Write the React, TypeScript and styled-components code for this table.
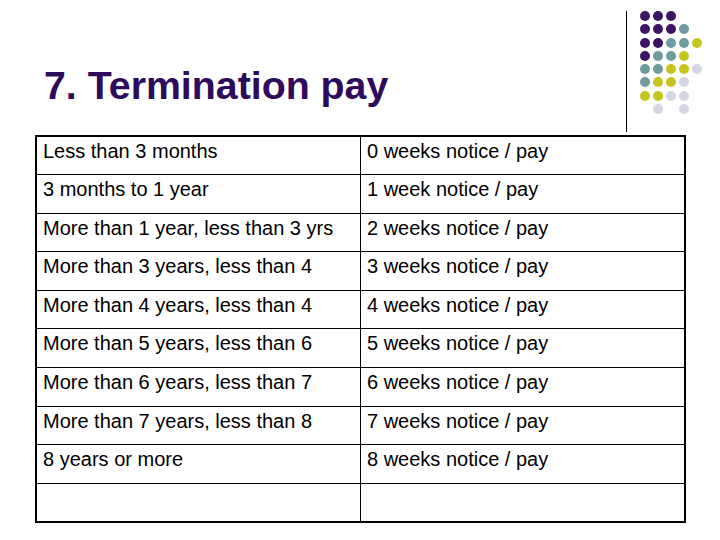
import styled, { createGlobalStyle } from 'styled-components';

const GlobalStyle = createGlobalStyle`
	html, body {
		margin: 0;
		padding: 0;
		background: #ffffff;
	}
	body {
		font-family: 'Liberation Sans', Arial, sans-serif;
	}
`;

const Slide = styled.div`
	width: 720px;
	height: 540px;
	background: #ffffff;
	overflow: hidden;
`;

const Header = styled.header`
	display: flex;
	height: 135px;
`;

const Title = styled.h1`
	flex: 1;
	margin: 0;
	padding: 62px 0 0 44px;
	font-size: 39.3px;
	line-height: 46px;
	font-weight: 700;
	color: #2e0b5c;
	letter-spacing: 0;
`;

const Decoration = styled.div`
	display: flex;
	align-items: flex-start;
	gap: 13px;
	padding-top: 11px;
	width: 94px;
`;

const Rule = styled.div`
	width: 1px;
	height: 121px;
	background: #000000;
`;

const DotGrid = styled.div`
	display: grid;
	grid-template-columns: repeat(5, 10px);
	grid-auto-rows: 10px;
	column-gap: 3px;
	row-gap: 3.3px;
`;

const Dot = styled.span<{ $color: string }>`
	width: 10px;
	height: 10px;
	border-radius: 50%;
	background: ${(p) => p.$color};
`;

const Table = styled.table`
	margin-left: 35px;
	width: 651px;
	border-collapse: collapse;
	border: 2px solid #000000;
	table-layout: fixed;
`;

const Row = styled.tr`
	height: 38.6px;
`;

const Cell = styled.td<{ $first?: boolean }>`
	width: ${(p) => (p.$first ? '311px' : 'auto')};
	border: 1px solid #000000;
	padding: 3px 6px 0 6px;
	vertical-align: top;
	font-size: 20px;
	line-height: 23px;
	color: #000000;
	white-space: nowrap;
`;

const P = '#3b1463';
const T = '#6e9c9e';
const Y = '#c6c51c';
const L = '#d5d5e6';

const dots: (string | null)[][] = [
	[P, P, P, null, null],
	[P, P, P, T, null],
	[P, P, T, T, Y],
	[P, T, T, Y, null],
	[T, T, Y, Y, L],
	[T, Y, Y, L, null],
	[Y, Y, L, L, null],
	[null, L, null, L, null]
];

const rows: [string, string][] = [
	['Less than 3 months', '0 weeks notice / pay'],
	['3 months to 1 year', '1 week notice / pay'],
	['More than 1 year, less than 3 yrs', '2 weeks notice / pay'],
	['More than 3 years, less than 4', '3 weeks notice / pay'],
	['More than 4 years, less than 4', '4 weeks notice / pay'],
	['More than 5 years, less than 6', '5 weeks notice / pay'],
	['More than 6 years, less than 7', '6 weeks notice / pay'],
	['More than 7 years, less than 8', '7 weeks notice / pay'],
	['8 years or more', '8 weeks notice / pay'],
	['', '']
];

export default function App() {
	return (
		<Slide>
			<GlobalStyle />
			<Header>
				<Title>7. Termination pay</Title>
				<Decoration>
					<Rule />
					<DotGrid>
						{dots.flatMap((line, r) =>
							line.map((c, i) => <Dot key={`${r}-${i}`} $color={c ?? 'transparent'} />)
						)}
					</DotGrid>
				</Decoration>
			</Header>
			<Table>
				<tbody>
					{rows.map(([period, notice], i) => (
						<Row key={i}>
							<Cell $first>{period}</Cell>
							<Cell>{notice}</Cell>
						</Row>
					))}
				</tbody>
			</Table>
		</Slide>
	);
}
